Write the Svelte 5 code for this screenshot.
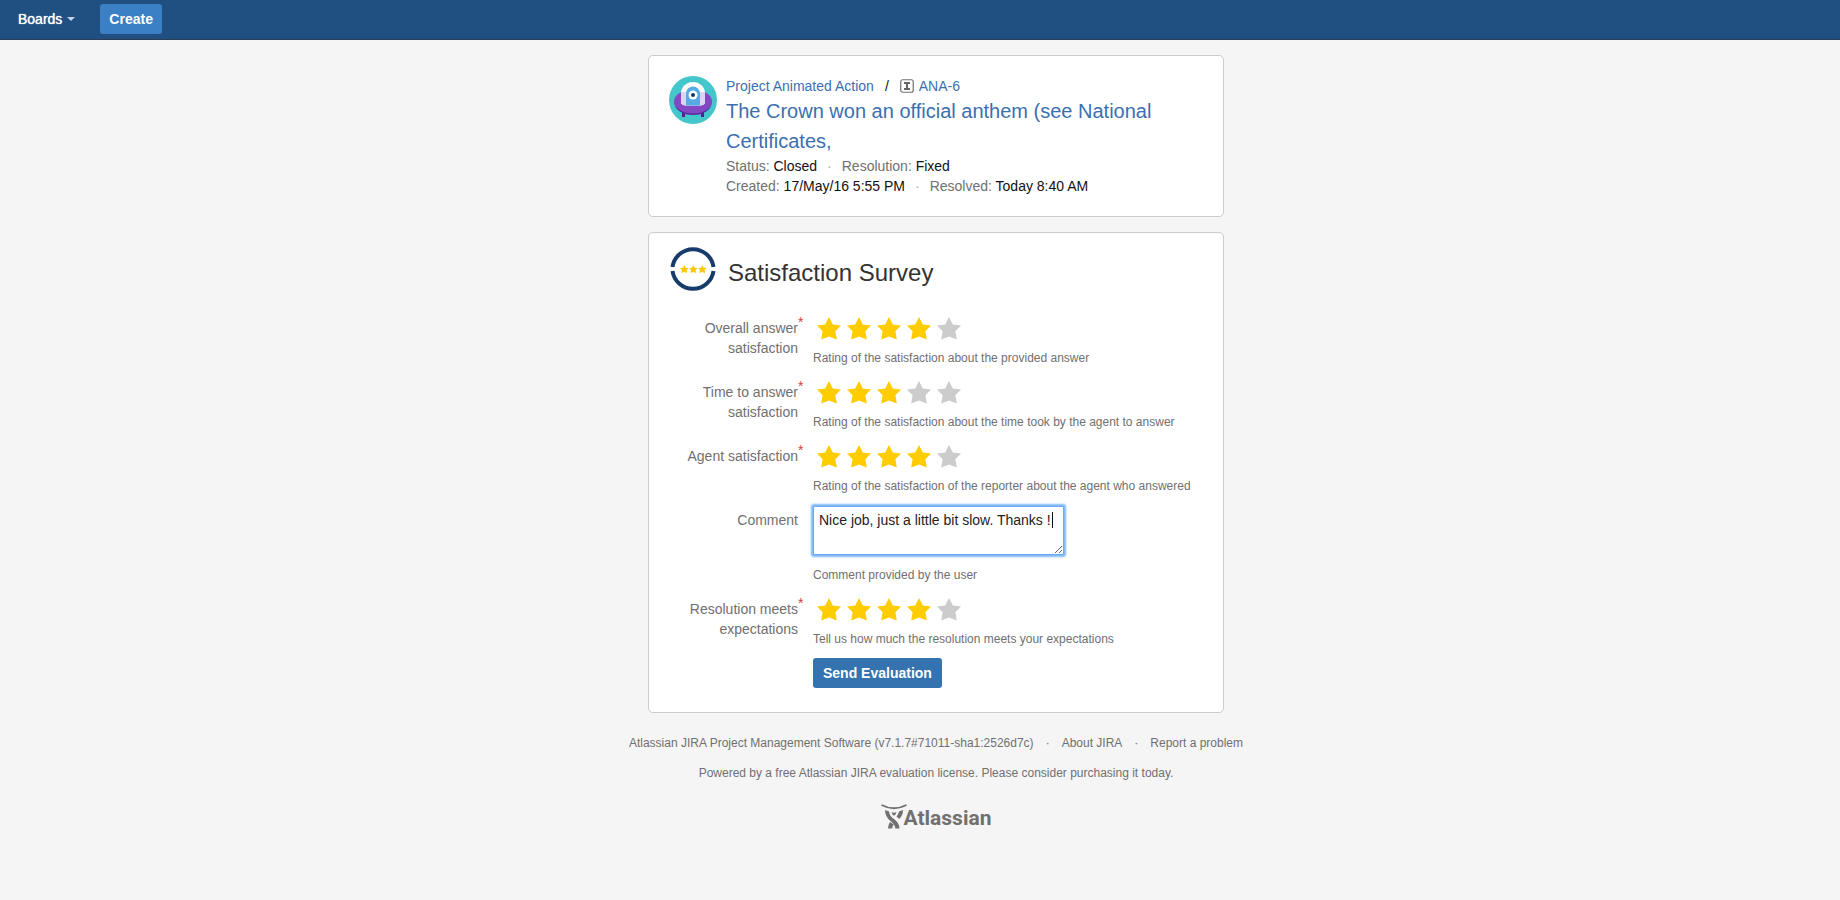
<script>
  import { onMount } from 'svelte';

  const STAR = 'M12 0l3.800 7.500 8.200.9-5.600 5.800 1.400 8.300L12 19.600l-7.800 2.900 1.400-8.300L0 8.400l8.200-.9z';

  let overall = $state(4);
  let time = $state(3);
  let agent = $state(4);
  let resolution = $state(4);
  let comment = $state('Nice job, just a little bit slow. Thanks !');
  let edited = $state(false);
  let commentBox;

  onMount(() => {
    commentBox.focus();
    commentBox.setSelectionRange(comment.length, comment.length);
  });
</script>

{#snippet rating(name, label, value, pick, help)}
  <div class="field" role="radiogroup" aria-labelledby="{name}-label">
    <div class="label" id="{name}-label">{label}<span class="required">*</span></div>
    <div class="control">
      <div class="stars">
        {#each [1, 2, 3, 4, 5] as n}
          <label class="star" class:on={n <= value}>
            <input type="radio" {name} value={n} checked={n === value} onchange={() => pick(n)} aria-label="{n} of 5" />
            <svg viewBox="0 0 24 23" width="24" height="23" aria-hidden="true"><path d={STAR} /></svg>
          </label>
        {/each}
      </div>
      <p class="help">{help}</p>
    </div>
  </div>
{/snippet}

<header>
  <button class="menu" type="button">Boards<span class="caret"></span></button>
  <button class="primary create" type="button">Create</button>
</header>

<main>
  <section class="card issue">
    <svg class="avatar" viewBox="0 0 48 48" width="48" height="48" aria-hidden="true">
      <circle cx="24" cy="24" r="24" fill="#43c7cb" />
      <path d="M13 33h3v8h-3zM32 33h3v8h-3z" fill="#4b2494" />
      <ellipse cx="24" cy="27" rx="18.500" ry="12" fill="#552a9f" />
      <ellipse cx="24" cy="25.500" rx="19" ry="12" fill="#8249c3" />
      <path d="M12 27V17.500a12 11.500 0 0 1 24 0V27q-1 2-5 2.500H17q-4-.5-5-2.500z" fill="#fff" />
      <path d="M12 16h24v11q-1 2-5 2.500H17q-4-.5-5-2.500z" fill="#d9d4f1" />
      <path d="M17 29.500V17.500a7 7 0 0 1 14 0v12z" fill="#58aae4" />
      <circle cx="24" cy="19" r="4.500" fill="#fff" />
      <circle cx="24" cy="19" r="2" fill="#17375f" />
    </svg>
    <div class="summary">
      <nav>
        <a href="#project">Project Animated Action</a>
        <span class="slash">/</span>
        <svg viewBox="0 0 14 14" width="14" height="14" aria-hidden="true">
          <rect x=".75" y=".75" width="12.500" height="12.500" rx="2" fill="#fff" stroke="#707070" stroke-width="1.200" />
          <path d="M4 3h6v2H8v4h2v2H4V9h2V5H4z" fill="#666" />
        </svg>
        <a href="#issue">ANA-6</a>
      </nav>
      <h1><a href="#issue">The Crown won an official anthem (see National Certificates,</a></h1>
      <div class="facts"><span>Status: <b>Closed</b></span><i>·</i><span>Resolution: <b>Fixed</b></span></div>
      <div class="facts"><span>Created: <b>17/May/16 5:55 PM</b></span><i>·</i><span>Resolved: <b>Today 8:40 AM</b></span></div>
    </div>
  </section>

  <section class="card survey">
    <div class="heading">
      <svg viewBox="0 0 48 48" width="48" height="48" aria-hidden="true">
        <g fill="none" stroke="#173c6c" stroke-width="4">
          <path d="M3.500 22a20.700 20.700 0 0 1 41 0" />
          <path d="M3.500 26a20.700 20.700 0 0 0 41 0" />
        </g>
        <g fill="#fdc70c">
          <path transform="translate(11 20) scale(.36)" d={STAR} />
          <path transform="translate(20 20) scale(.36)" d={STAR} />
          <path transform="translate(29 20) scale(.36)" d={STAR} />
        </g>
      </svg>
      <h2>Satisfaction Survey</h2>
    </div>

    <form onsubmit={(e) => e.preventDefault()}>
      {@render rating('overall', 'Overall answer satisfaction', overall, (n) => (overall = n), 'Rating of the satisfaction about the provided answer')}
      {@render rating('time', 'Time to answer satisfaction', time, (n) => (time = n), 'Rating of the satisfaction about the time took by the agent to answer')}
      {@render rating('agent', 'Agent satisfaction', agent, (n) => (agent = n), 'Rating of the satisfaction of the reporter about the agent who answered')}
      <div class="field">
        <label class="label" for="comment">Comment</label>
        <div class="control">
          <textarea id="comment" class:edited rows="2" bind:value={comment} bind:this={commentBox} onkeydown={() => (edited = true)}></textarea>
          {#if !edited}<span class="cursor"></span>{/if}
          <p class="help">Comment provided by the user</p>
        </div>
      </div>
      {@render rating('resolution', 'Resolution meets expectations', resolution, (n) => (resolution = n), 'Tell us how much the resolution meets your expectations')}
      <div class="field actions">
        <button class="primary send" type="submit">Send Evaluation</button>
      </div>
    </form>
  </section>

  <footer>
    <div class="links">
      <span>Atlassian JIRA Project Management Software (v7.1.7#71011-sha1:2526d7c)</span><i>·</i><a href="#about">About JIRA</a><i>·</i><a href="#report">Report a problem</a>
    </div>
    <p>Powered by a free Atlassian JIRA evaluation license. Please consider purchasing it today.</p>
    <a class="brand" href="#atlassian">
      <svg viewBox="0 0 26 25" width="26" height="25" aria-hidden="true">
        <path d="M.5 1Q13 7.500 25.500 1" fill="none" stroke="#707070" stroke-width="1.800" />
        <g fill="#707070">
          <path d="M4 6l4 1.500Q8.500 12 13 15q5.500 4 5.500 9.500h-4.200Q14 20.500 10 17.500 4 13 4 6z" />
          <path d="M22 6l-4 1.500q-.5 3-2.500 5l2.700 2.500Q22 11.500 22 6zM9 18q-2 3-2 6.500h4.200q.2-2.500 1.600-4Z" />
          <path d="M10.500 8.300q2.500.8 5 0-.3 2-2.500 3.500-2.200-1.500-2.500-3.500z" />
        </g>
      </svg>
      <span>Atlassian</span>
    </a>
  </footer>
</main>

<style>
  :global(body) {
    margin: 0;
    background: #f5f5f5;
    color: #111;
    font: 14px/20px 'Liberation Sans', Arial, sans-serif;
  }
  a { color: #3b6fb0; text-decoration: none; }
  button, textarea { font: inherit; }
  svg { display: block; flex: none; }
  h1, h2, p { margin: 0; font-weight: 400; }

  header {
    display: flex;
    align-items: center;
    gap: 15px;
    box-sizing: border-box;
    height: 40px;
    padding: 0 8px 1px;
    background: #205081;
    border-bottom: 1px solid #2e3d54;
  }
  .menu {
    display: flex;
    align-items: center;
    gap: 5px;
    height: 30px;
    padding: 0 10px;
    border: 0;
    background: none;
    color: #fff;
    text-shadow: 0 0 1px #fff;
  }
  .caret {
    border: 4px solid transparent;
    border-top-color: #c5d3e2;
    border-bottom: 0;
  }
  .primary {
    height: 30px;
    padding: 0 10px;
    border: 0;
    border-radius: 3px;
    color: #fff;
    font-weight: 700;
  }
  .create { padding: 0 9px; background: #3b7fc4; }
  .send { background: #3572b0; }

  main {
    display: flex;
    flex-direction: column;
    align-items: center;
    gap: 15px;
    padding: 15px 0 0 32px;
  }
  .card {
    box-sizing: border-box;
    width: 100%;
    max-width: 576px;
    padding: 20px;
    background: #fff;
    border: 1px solid #ccc;
    border-radius: 5px;
  }
  .issue { display: flex; gap: 9px; }
  nav { display: flex; align-items: center; }
  .slash { margin: 0 11px; }
  nav svg { margin-right: 5px; }
  h1 { font-size: 20px; line-height: 30px; }
  .facts { color: #707070; }
  .facts b { color: #111; font-weight: 400; }
  .facts i { margin: 0 10px; color: #aaa; font-style: normal; }

  .survey { padding-top: 12px; }
  .heading {
    display: flex;
    align-items: center;
    gap: 11px;
    margin-bottom: 16px;
  }
  h2 { padding-top: 8px; color: #333; font-size: 24px; line-height: 28px; }

  .field { display: flex; gap: 15px; padding: 5px 0; }
  .label {
    box-sizing: border-box;
    position: relative;
    width: 129px;
    padding: 4px 0 0 15px;
    color: #707070;
    text-align: right;
  }
  .required { position: absolute; top: -2px; color: #d04437; }
  .control { position: relative; flex: 1; min-width: 0; }
  .stars { display: flex; gap: 6px; height: 28px; padding: 0 0 1px 4px; align-items: center; }
  .star { display: block; cursor: pointer; }
  .star input { position: absolute; opacity: 0; width: 1px; height: 1px; margin: 0; pointer-events: none; }
  .star path { fill: #ccc; }
  .star.on path { fill: #fc0; }
  .help { margin-top: 5px; color: #707070; font-size: 12px; }
  textarea {
    display: block;
    box-sizing: border-box;
    width: 251px;
    max-width: 100%;
    height: 49px;
    margin-bottom: 10px;
    padding: 3px 5px;
    border: 1px solid #6aaaf5;
    border-radius: 1px;
    outline: 0;
    box-shadow: 0 0 2px 2px #7db8fa;
    color: #222;
    caret-color: transparent;
    resize: both;
    overflow: auto;
  }
  textarea.edited { caret-color: auto; }
  .cursor {
    position: absolute;
    top: 6px;
    left: 239px;
    width: 1px;
    height: 16px;
    background: #111;
  }
  .actions { padding: 4px 0 4px 144px; }

  footer {
    display: flex;
    flex-direction: column;
    align-items: center;
    gap: 10px;
    padding-top: 5px;
    color: #707070;
    font-size: 12px;
  }
  footer a { color: inherit; }
  .links i { margin: 0 12px; font-style: normal; }
  .brand { display: flex; margin-top: 11px; }
  .brand span {
    margin-left: -3px;
    font: 700 21px/29px Roboto, 'Liberation Sans', sans-serif;
  }
</style>
